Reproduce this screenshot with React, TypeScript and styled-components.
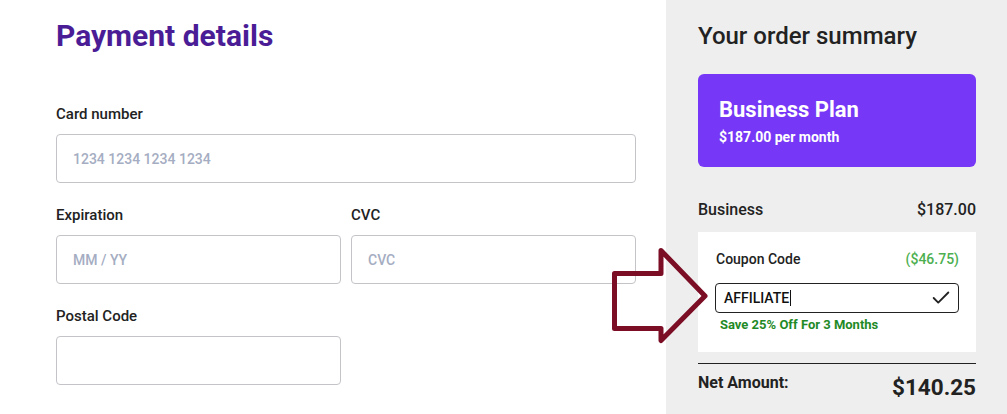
import React from "react";
import styled, { createGlobalStyle } from "styled-components";

const Global = createGlobalStyle`
  html, body { margin: 0; padding: 0; background: #ffffff; }
  body { font-family: Roboto, "Noto Sans", Arial, sans-serif; color: #222; }
  * { box-sizing: border-box; }
`;

const Page = styled.div`
  position: relative;
  display: grid;
  grid-template-columns: 666px 1fr;
  width: 1007px;
  height: 414px;
  overflow: hidden;
`;

const FormPane = styled.section`
  background: #fff;
  padding: 18px 30px 0 56px;
  display: flex;
  flex-direction: column;
`;

const Title = styled.h1`
  margin: 0;
  font-size: 30px;
  line-height: 36px;
  font-weight: 700;
  color: #4a1d96;
`;

const Fields = styled.div`
  margin-top: 50px;
  display: grid;
  grid-template-columns: 1fr 1fr;
  column-gap: 10px;
  row-gap: 22px;
`;

const Field = styled.label<{ $span?: number }>`
  display: flex;
  flex-direction: column;
  gap: 10px;
  grid-column: span ${(p) => p.$span ?? 1};
`;

const Label = styled.span`
  font-size: 15px;
  line-height: 20px;
  font-weight: 500;
  color: #222;
`;

const Input = styled.input`
  height: 49px;
  width: 100%;
  border: 1px solid #c4c4c8;
  border-radius: 4px;
  padding: 0 16px;
  font-family: Roboto, Arial, sans-serif;
  font-size: 14px;
  font-weight: 500;
  color: #222;
  outline: none;
  background: #fff;
  &::placeholder { color: #a5adc2; }
`;

const SummaryPane = styled.aside`
  background: #eeeeee;
  padding: 21px 31px 0 32px;
  display: flex;
  flex-direction: column;
`;

const SummaryTitle = styled.h2`
  margin: 0;
  font-size: 24px;
  line-height: 30px;
  font-weight: 500;
  color: #222;
`;

const PlanCard = styled.div`
  margin-top: 23px;
  background: #7637f6;
  border-radius: 6px;
  padding: 22px 21px 21px;
  color: #fff;
  display: flex;
  flex-direction: column;
  gap: 4px;
`;

const PlanName = styled.div`
  font-size: 22px;
  line-height: 28px;
  font-weight: 700;
`;

const PlanPrice = styled.div`
  font-size: 14px;
  line-height: 18px;
  font-weight: 700;
`;

const Row = styled.div`
  display: flex;
  justify-content: space-between;
  align-items: center;
  font-size: 16px;
  line-height: 20px;
  font-weight: 500;
  color: #222;
`;

const BusinessRow = styled(Row)`
  margin-top: 33px;
`;

const CouponBox = styled.div`
  margin-top: 12px;
  background: #fff;
  padding: 18px 17px 19px;
  display: flex;
  flex-direction: column;
`;

const CouponHead = styled.div`
  display: flex;
  justify-content: space-between;
  font-size: 14px;
  line-height: 18px;
  font-weight: 500;
  padding-left: 1px;
`;

const Discount = styled.span`
  color: #4caf50;
`;

const CouponInput = styled.div`
  margin-top: 15px;
  height: 30px;
  border: 1px solid #222;
  border-radius: 4px;
  display: flex;
  align-items: center;
  justify-content: space-between;
  padding: 0 6px 0 8px;
  font-size: 14px;
  font-weight: 500;
  color: #111;
`;

const Caret = styled.span`
  display: inline-block;
  width: 1px;
  height: 16px;
  background: #111;
  vertical-align: -3px;
  margin-left: 1px;
`;

const SaveNote = styled.div`
  margin-top: 4px;
  padding-left: 5px;
  font-size: 13px;
  line-height: 16px;
  font-weight: 700;
  color: #1f8a26;
`;

const Divider = styled.hr`
  margin: 11px 0 0;
  border: 0;
  border-top: 1px solid #222;
`;

const NetRow = styled.div`
  margin-top: 9px;
  display: flex;
  justify-content: space-between;
  align-items: flex-start;
  color: #222;
  font-weight: 700;
`;

const NetLabel = styled.span`
  font-size: 16px;
  line-height: 20px;
`;

const NetValue = styled.span`
  font-size: 22.5px;
  line-height: 28px;
`;

const Arrow = styled.svg`
  position: absolute;
  left: 600px;
  top: 240px;
  width: 120px;
  height: 110px;
  overflow: visible;
`;

export default function App() {
  return (
    <>
      <Global />
      <Page>
        <FormPane>
          <Title>Payment details</Title>
          <Fields>
            <Field $span={2}>
              <Label>Card number</Label>
              <Input placeholder="1234 1234 1234 1234" />
            </Field>
            <Field>
              <Label>Expiration</Label>
              <Input placeholder="MM / YY" />
            </Field>
            <Field>
              <Label>CVC</Label>
              <Input placeholder="CVC" />
            </Field>
            <Field>
              <Label>Postal Code</Label>
              <Input />
            </Field>
          </Fields>
        </FormPane>
        <SummaryPane>
          <SummaryTitle>Your order summary</SummaryTitle>
          <PlanCard>
            <PlanName>Business Plan</PlanName>
            <PlanPrice>$187.00 per month</PlanPrice>
          </PlanCard>
          <BusinessRow>
            <span>Business</span>
            <span>$187.00</span>
          </BusinessRow>
          <CouponBox>
            <CouponHead>
              <span>Coupon Code</span>
              <Discount>($46.75)</Discount>
            </CouponHead>
            <CouponInput>
              <span>
                AFFILIATE
                <Caret />
              </span>
              <svg width="22" height="22" viewBox="0 0 24 24" fill="none" stroke="#222" strokeWidth="2" strokeLinecap="round" strokeLinejoin="round">
                <path d="M20 6 9 17l-5-5" />
              </svg>
            </CouponInput>
            <SaveNote>Save 25% Off For 3 Months</SaveNote>
          </CouponBox>
          <Divider />
          <NetRow>
            <NetLabel>Net Amount:</NetLabel>
            <NetValue>$140.25</NetValue>
          </NetRow>
        </SummaryPane>
        <Arrow viewBox="600 240 120 110">
          <polygon
            points="614.5,273.5 661,273.5 661,250.5 705,296 661,340.5 661,328.5 614.5,328.5"
            fill="none"
            stroke="#7b0d24"
            strokeWidth="5"
            strokeLinejoin="round"
          />
        </Arrow>
      </Page>
    </>
  );
}
